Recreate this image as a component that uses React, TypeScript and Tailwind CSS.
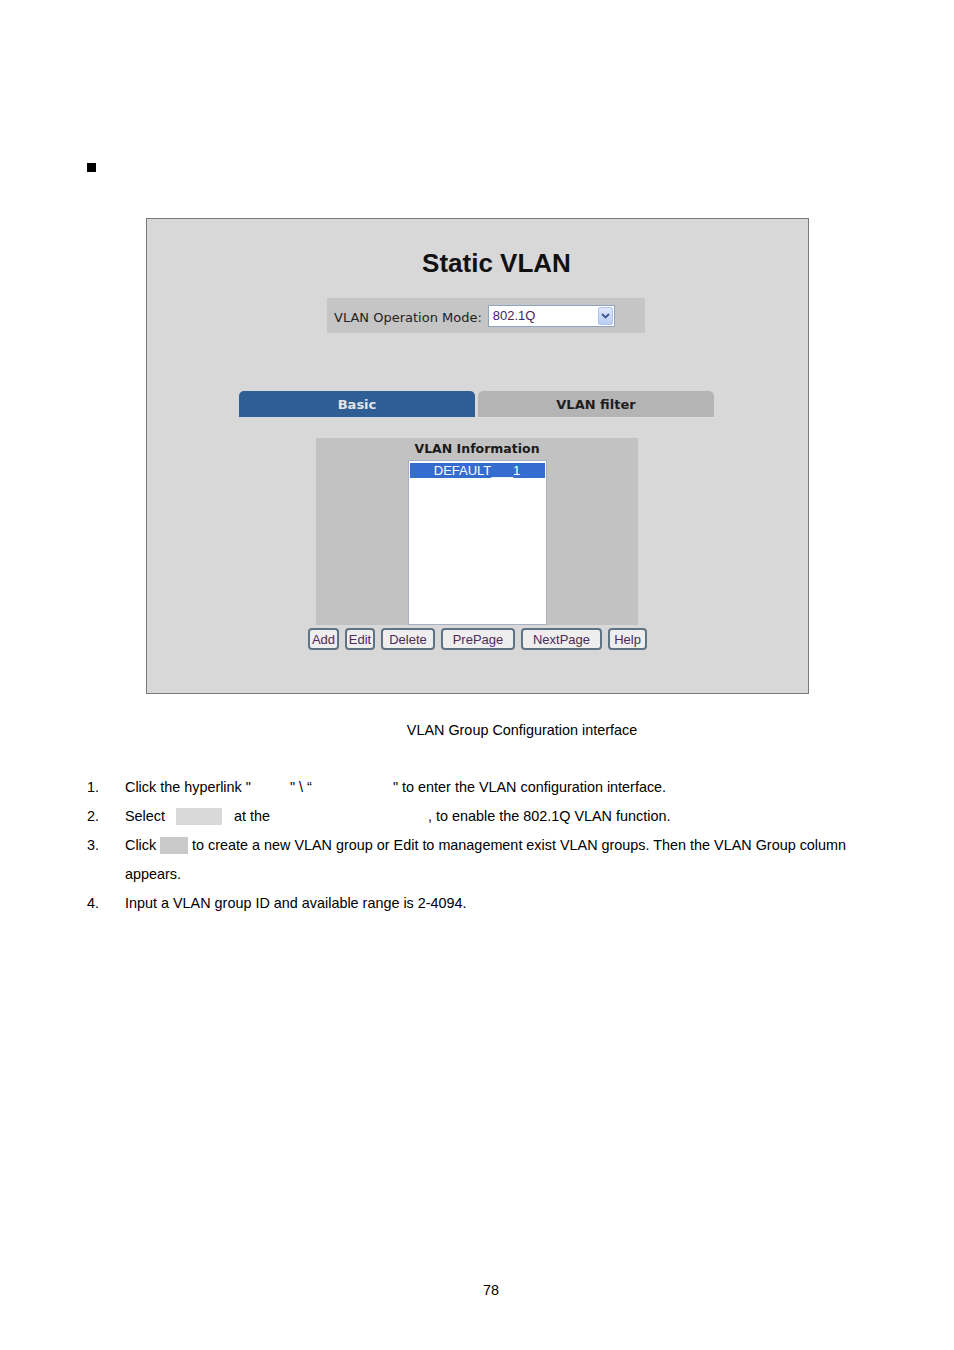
import React from "react";

const sans = { fontFamily: '"Liberation Sans", Arial, sans-serif' };
const verd = { fontFamily: '"DejaVu Sans", Verdana, sans-serif' };

function Btn({ label, w }: { label: string; w: string }) {
  return (
    <div
      className={`${w} h-[22px] flex items-center justify-center rounded-[4px] border-2 border-[#5f7384] bg-[#eeeeee] text-[13px] text-[#4d2a5a] leading-none`}
      style={sans}
    >
      {label}
    </div>
  );
}

export default function App() {
  return (
    <div className="w-[954px] h-[1350px] bg-white text-black flex flex-col" style={sans}>
      {/* bullet */}
      <div className="mt-[163px] ml-[87px] w-[9px] h-[9px] bg-black" />

      {/* screenshot */}
      <div className="mt-[46px] ml-[146px] w-[663px] h-[476px] border border-[#7a7a7a] bg-[#d8d8d8] flex flex-col">
        <div
          className="mt-[29px] pl-[38px] w-full text-center text-[26px] leading-[30px] font-bold text-[#111]"
          style={sans}
        >
          Static VLAN
        </div>

        <div className="mt-[20px] ml-[180px] w-[318px] h-[35px] bg-[#c5c5c5] flex items-center pl-[7px] gap-[6px]">
          <span className="text-[13px] text-[#222] leading-none pt-[4px]" style={verd}>
            VLAN Operation Mode:
          </span>
          <div className="w-[127px] h-[22px] bg-white border border-[#8ea4c0] flex items-center justify-between pl-[4px] pr-[1px]">
            <span className="text-[13px] text-[#4a2458] leading-none" style={sans}>
              802.1Q
            </span>
            <div className="w-[15px] h-[18px] rounded-[2px] bg-gradient-to-b from-[#dfe8fb] to-[#b9cdf3] border border-[#b0c3ea] flex items-center justify-center">
              <svg width="9" height="6" viewBox="0 0 9 6">
                <path d="M1 1 L4.5 4.5 L8 1" fill="none" stroke="#3d5690" strokeWidth="1.8" />
              </svg>
            </div>
          </div>
        </div>

        <div className="mt-[58px] ml-[92px] flex gap-[3px]">
          <div
            className="w-[236px] h-[27px] pt-[2px] rounded-t-[5px] bg-[#2e5e94] flex items-center justify-center text-[13px] font-bold text-[#e4e4e4] border-b border-[#d0d8e2]"
            style={verd}
          >
            Basic
          </div>
          <div
            className="w-[236px] h-[27px] pt-[2px] rounded-t-[5px] bg-[#b4b4b4] flex items-center justify-center text-[13px] font-bold text-[#1e1e1e] border-b border-[#e0e0e0]"
            style={verd}
          >
            VLAN filter
          </div>
        </div>

        <div className="mt-[20px] ml-[169px] w-[322px] h-[187px] bg-[#c2c2c2] flex flex-col items-center">
          <div className="pt-[1px] h-[22px] text-[12.5px] leading-[20px] font-bold text-[#1a1a1a]" style={verd}>
            VLAN Information
          </div>
          <div className="w-[139px] h-[165px] bg-white border border-[#a7b0c0] pt-[2px] px-[1px]">
            <div
              className="h-[15px] bg-[#356dcf] text-white text-[13px] leading-[15px] text-center"
              style={sans}
            >
              DEFAULT___1
            </div>
          </div>
        </div>

        <div className="mt-[3px] ml-[161px] flex gap-[6px]">
          <Btn label="Add" w="w-[31px]" />
          <Btn label="Edit" w="w-[30px]" />
          <Btn label="Delete" w="w-[54px]" />
          <Btn label="PrePage" w="w-[74px]" />
          <Btn label="NextPage" w="w-[81px]" />
          <Btn label="Help" w="w-[39px]" />
        </div>
      </div>

      {/* caption */}
      <div className="mt-[26px] pl-[90px] w-full text-center text-[14.4px] leading-[20px]">
        VLAN Group Configuration interface
      </div>

      {/* list */}
      <div className="mt-[33px] flex flex-col text-[14.4px] leading-[29px]">
        <div className="flex">
          <span className="ml-[87px] w-[38px]">1.</span>
          <span className="inline-block w-[165px] whitespace-pre">Click the hyperlink "</span>
          <span className="inline-block w-[103px] whitespace-pre">" \ “</span>
          <span className="whitespace-pre">" to enter the VLAN configuration interface.</span>
        </div>
        <div className="flex items-center">
          <span className="ml-[87px] w-[38px]">2.</span>
          <span className="inline-block w-[51px]">Select</span>
          <span className="inline-block w-[46px] h-[17px] bg-[#d9d9d9]" />
          <span className="inline-block ml-[12px] w-[194px]">at the</span>
          <span>, to enable the 802.1Q VLAN function.</span>
        </div>
        <div className="flex items-center">
          <span className="ml-[87px] w-[38px]">3.</span>
          <span className="inline-block w-[35px]">Click</span>
          <span className="inline-block w-[28px] h-[17px] bg-[#c9c9c9]" />
          <span className="ml-[4px]">
            to create a new VLAN group or Edit to management exist VLAN groups. Then the VLAN Group column
          </span>
        </div>
        <div className="flex">
          <span className="ml-[125px]">appears.</span>
        </div>
        <div className="flex">
          <span className="ml-[87px] w-[38px]">4.</span>
          <span>Input a VLAN group ID and available range is 2-4094.</span>
        </div>
      </div>

      {/* page number */}
      <div className="mt-[362px] pl-[28px] w-full text-center text-[14.4px] leading-[20px]">78</div>
    </div>
  );
}
